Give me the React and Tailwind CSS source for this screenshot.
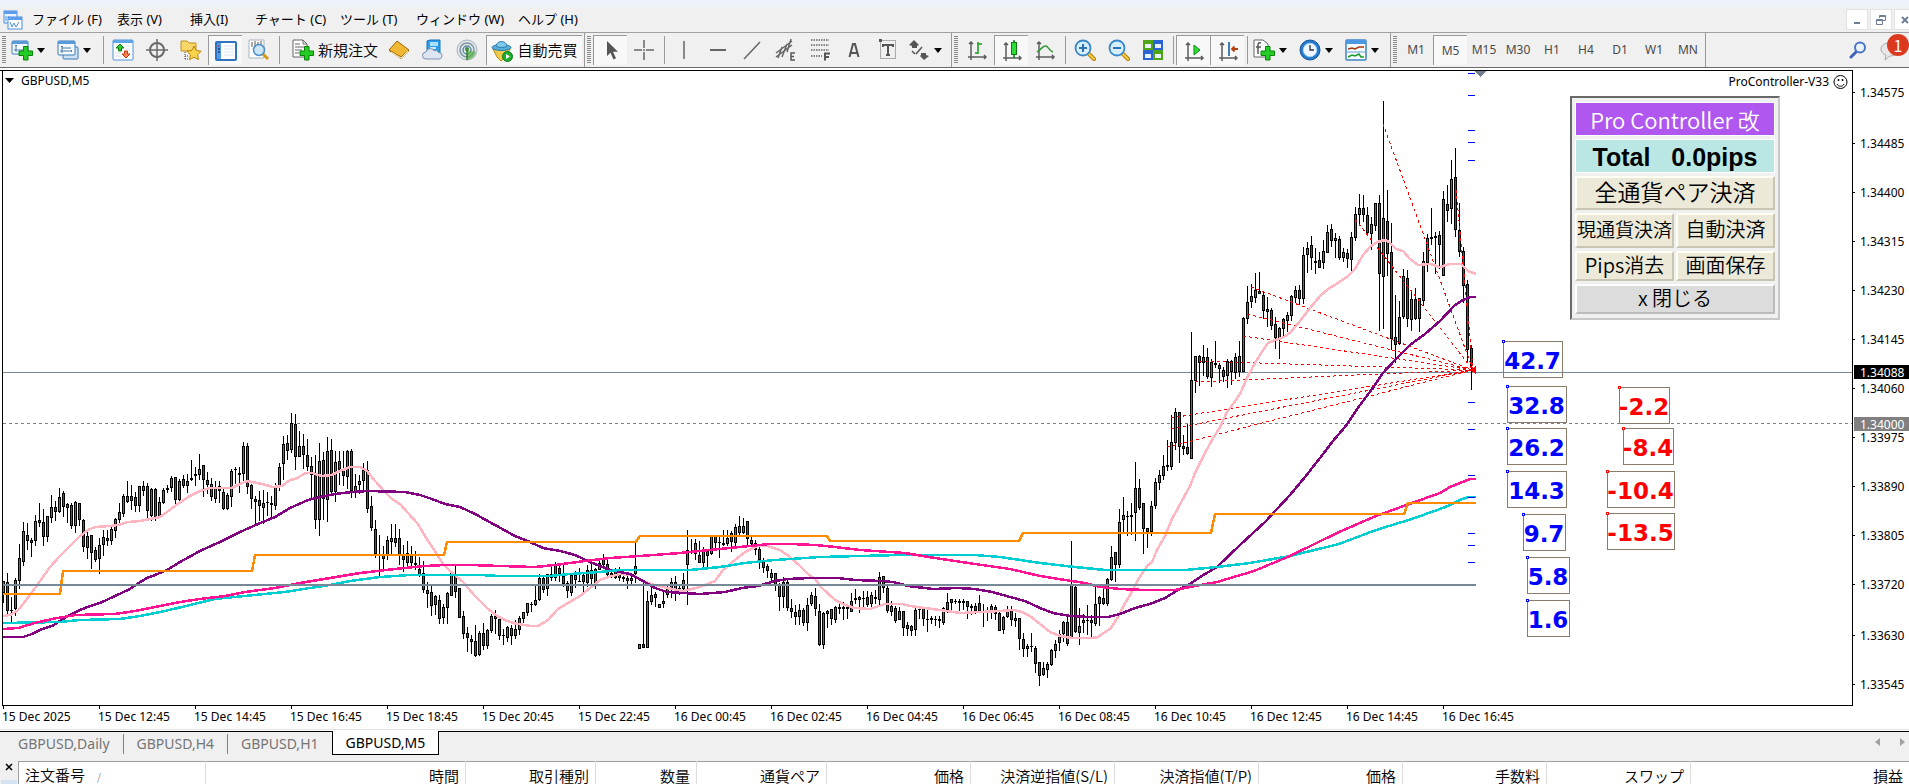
import { useMemo, useState } from "react";

// Candles as "high top bottom low direction", three units per pixel, counted down from `base`
const CANDLE_GROUPS = [
  {
    first: 0,
    base: 380,
    rows: `603 603 638 670 u,579 606 691 702 d,651 691 691 728 d,594 600 685 710 u,494 534 601 629 u,426 454 545 558 u,429 465 481 510 d,476 481 487 533 d,405 423 482 498 u,369 420 427 441 d,387 426 469 498 d,408 409 469 486 u,345 381 412 429 u,363 381 394 423 d,324 352 395 399 u,333 340 379 412 d,369 373 382 430 u,369 376 437 447 d,363 367 437 459 u,369 370 418 439 d,417 421 499 516 d,455 468 502 537 u,465 466 517 567 d,501 511 538 546 d,474 496 536 582 u,450 472 493 528 u,450 475 482 498 d,436 447 481 495 u,414 418 451 476 u,369 397 418 432 u,342 349 400 411 u,303 349 363 369 d,315 349 361 391 d,336 352 376 397 d,318 319 376 397 u,303 319 331 349 u,309 319 391 418 d,324 328 406 423 u,324 328 412 423 d,351 367 409 415 u,324 331 367 372 u,315 324 328 339 d,288 294 322 336 u,291 292 358 376 d,297 304 358 366 u,285 298 316 324 d,282 304 316 339 u,240 296 298 303 d,261 283 286 318 d,222 268 283 300 u,255 256 298 352 d,276 301 313 342 d,294 313 349 363 d,303 322 355 369 u,303 319 331 370 d,327 337 385 390 d,339 346 385 390 u,267 274 349 381 u,261 268 268 312 d,261 280 283 340 d,186 199 280 313 u,189 199 319 343 d,312 316 355 387 d,348 358 364 435 d,333 361 376 423 d,330 370 382 432 u,336 367 367 409 d,348 370 373 420 d,309 319 376 391 u,249 262 318 333 u,168 193 250 300 u,165 190 211 240 d,99 130 208 219 u,102 133 229 270 d,153 199 229 232 u,162 199 223 267 d,177 226 259 273 d,231 259 283 355 d,225 283 418 448 d,189 244 418 468 u,216 241 355 420 d,171 214 358 426 u,177 211 334 349 d,213 247 334 366 u,213 244 268 316 d,213 268 286 318 d,210 214 289 327 u,207 214 331 354 d,282 319 334 354 u,285 304 313 342 u,249 271 301 330 u,243 271 385 399 d,349 379 442 453 d,420 448 520 534 d,465 522 524 588 d,498 523 535 567 d,468 481 523 540 u,432 475 485 522 u,432 475 487 502 d,447 475 522 555 d,495 523 538 576 d,483 520 547 562 u,498 523 547 565 d,513 550 553 570 d,531 568 583 591 d,543 580 628 639 d,606 631 640 684 d,618 637 676 708 d,645 649 673 705 u,645 661 715 732 d,672 682 712 732 u,636 640 682 732 u,579 580 646 648 u,558 582 634 655 d,624 625 712 714 d,693 709 760 777 d,741 760 772 816 d,766 778 784 822 d,735 784 826 833 d,754 760 823 828 u,729 760 796 811 d,747 751 796 807 u,702 709 751 759 u,690 709 715 762 d,714 718 766 780 d,749 766 766 795 d,739 742 772 787 u,735 745 766 795 d,720 748 766 777 u,708 715 748 765 u`,
  },
  {
    first: 130,
    base: 500,
    rows: `336 337 355 370 u,309 310 338 349 u,306 313 313 336 d,258 300 313 318 u,222 235 298 303 u,233 235 268 280 d,222 223 265 288 u,201 223 232 244 u,186 196 232 243 u,189 205 220 246 d,195 229 250 262 d,243 250 271 294 d,222 226 277 288 u,213 226 238 265 u,204 244 244 246 d,222 226 244 276 d,195 211 247 261 u,193 211 235 261 d,205 207 248 267 u,174 190 208 210 u,162 178 193 208 d,180 193 223 231 d,207 220 229 234 d,205 208 232 238 d,201 224 232 243 d,228 233 234 246 d,225 235 241 267 d,222 235 241 252 u,123 199 220 249 u,432 433 445 447 u,240 433 442 444 d,273 304 442 444 u,252 286 304 315 u,278 283 292 321 d,312 313 322 323 u,276 304 311 326 u,252 265 283 294 u,234 247 265 294 u,228 247 265 303 d,252 265 277 285 d,219 241 266 274 u,90 151 193 315 u,117 157 158 163 d,117 130 160 180 u,123 166 187 189 d,141 151 187 201 u,151 153 167 205 d,105 106 160 165 u,106 109 127 144 d,108 127 127 174 d,90 130 133 138 d,90 115 130 138 u,94 100 124 156 d,72 82 127 141 u,48 79 97 111 u,54 79 97 102 u,63 64 115 136 d,108 121 130 145 u,120 130 148 166 d,132 148 178 207 d,174 184 202 220 d,192 199 211 234 d,208 220 232 243 u,219 220 256 273 d,250 256 289 333 d,231 247 289 324 u,234 246 322 333 d,297 325 334 355 d,315 337 349 375 d,312 331 349 375 u,324 331 367 378 d,294 316 367 393 u,276 286 310 318 u,264 289 325 348 d,312 334 433 438 d,336 340 433 447 u,330 333 341 384 u,327 328 355 375 d,318 322 358 369 u,303 322 325 342 d,306 322 325 360 d,312 322 325 357 d,279 304 334 336 u,267 295 298 312 d,288 292 298 339 u,273 295 295 321 d,273 292 313 321 d,276 286 311 324 u,272 292 295 312 d,216 232 298 315 u,228 229 262 280 d,258 265 331 340 d`,
  },
  {
    first: 222,
    base: 400,
    rows: `603 618 634 648 u,619 625 661 669 d,621 634 658 660 u,633 634 682 708 d,666 676 685 708 u,675 678 691 708 d,624 631 689 708 u,618 627 628 657 d,624 626 655 678 d,630 658 658 696 d,648 655 658 672 d,648 657 658 678 d,648 657 662 684 d,621 625 667 675 u,579 606 628 639 u,597 598 607 633 d,597 604 605 612 d,597 604 607 633 d,597 604 607 630 d,603 604 619 657 d,612 618 622 645 d,609 619 631 643 d,585 610 634 636 d,612 636 637 681 d,621 636 637 663 d,612 619 637 657 u,617 622 640 660 d,636 640 691 693 d,648 652 688 702 u,618 634 650 655 u,618 630 658 678 d,639 655 661 681 u,654 655 715 750 d,699 718 745 771 d,732 739 745 772 u,699 739 739 756 d,738 745 791 819 d,786 787 826 858 d,786 805 824 828 u,786 793 808 834 u,747 751 794 798 u,720 733 751 774 u,690 703 727 753 u,663 667 700 726 u,645 667 731 738 d,423 556 715 716 u,556 562 694 699 d,624 679 697 735 u,642 660 667 700 u,615 660 661 705 d,645 661 667 711 d,560 613 670 678 u,588 592 611 678 u,555 595 610 615 d,534 538 610 619 u,438 472 538 543 u,456 457 493 546 d,327 367 493 504 u,291 346 358 396 u,333 348 350 408 d,309 346 349 406 d,186 265 337 423 u,237 265 322 330 d,309 310 385 462 d,384 385 394 444 d,303 319 394 408 u,234 247 316 327 u,210 226 247 270 u,165 199 227 240 u,120 196 199 213 d,45 127 199 212 u,24 37 127 150 u,36 37 139 189 d,105 139 145 165 d,72 142 161 165 d`,
  },
  {
    first: 297,
    base: 80,
    rows: `756 901 1135 1138 u,828 829 901 939 u,825 829 847 918 d,795 832 848 888 u,804 832 889 898 d,837 847 892 921 u,783 850 853 864 d,849 856 865 909 d,861 871 889 906 d,837 844 886 924 u,840 844 874 915 d,819 832 877 898 u,783 829 874 891 d,712 715 874 876 u,618 667 715 732 u,612 649 664 684 u,579 631 652 669 u,576 634 640 644 d,636 646 691 717 d,651 688 694 741 u,686 691 736 750 d,711 733 772 807 d,741 745 772 837 u,714 718 745 768 u,696 706 721 756 u,645 649 706 723 u,618 631 652 669 u,615 631 655 675 d,501 526 655 672 u,486 505 523 579 u,468 496 532 570 d,504 544 548 582 d,516 541 562 564 d,480 514 547 567 u,435 457 517 519 u,432 448 481 501 d,459 475 481 534 u,468 478 532 540 d,504 517 532 546 u,507 520 535 564 d,456 472 538 573 u,381 403 472 483 u,342 385 403 432 u,345 385 403 426 d,381 406 457 465 d,411 433 460 510 u,369 370 436 453 u,345 370 580 753 d,63 415 589 747 u,330 424 520 588 d,429 517 775 811 d,645 772 793 849 d,663 712 790 795 u,567 589 709 717 u,570 595 715 743 d,630 658 718 753 u,624 658 715 720 d,654 655 715 756 u,516 544 661 678 u,462 475 547 576 u,384 471 475 495 d,456 469 472 582 d,453 466 493 567 d,333 358 586 588 u,315 373 391 426 d,240 298 385 432 u,204 292 448 471 d,369 451 514 531 d,501 514 616 669 d,600 613 808 846 d,795 805 857 930 d`,
  },
];

const AVERAGES = [
  {
    color: "#ffb6c1",
    points: "3,616 10,615 17,611 20,608 30,595 40,581 50,567 60,556 70,546 80,536 88,530 95,527 110,526 118,525 128,522 140,521 155,518 160,517 167,512 175,506 190,496 200,491 210,488 232,488 240,484 247,481 262,484 273,487 282,486 290,480 295,479 306,473 312,473 322,476 332,475 340,471 350,467 360,467 367,471 375,481 384,491 392,499 400,504 408,513 418,524 425,536 433,548 443,564 450,571 456,576 463,582 475,596 487,608 497,616 505,620 513,623 530,626 538,626 548,620 558,609 568,603 580,596 590,588 600,580 608,577 620,574 633,575 645,582 655,585 667,588 683,591 700,587 715,581 723,570 735,560 745,552 757,546 767,546 780,550 790,557 800,566 808,574 815,579 822,588 835,600 845,605 855,608 870,609 885,604 902,604 910,606 925,608 940,610 960,613 980,612 1000,611 1014,610 1022,612 1030,616 1040,624 1050,632 1060,636 1072,638 1092,638 1098,637 1110,629 1117,619 1124,605 1130,595 1138,580 1147,566 1152,562 1157,550 1165,536 1172,519 1178,508 1185,495 1190,486 1195,473 1204,455 1212,440 1220,427 1227,412 1233,404 1240,394 1247,378 1255,363 1263,350 1268,343 1273,341 1284,337 1290,333 1300,321 1310,308 1320,296 1328,289 1338,283 1347,277 1355,269 1363,255 1370,247 1377,242 1386,240 1390,243 1396,249 1403,251 1410,259 1418,265 1430,264 1440,267 1450,264 1461,264 1468,271 1476,274",
  },
  {
    color: "#800080",
    points: "3,637 23,637 32,634 42,629 52,626 60,621 68,616 80,610 90,606 100,603 115,596 130,589 137,584 147,578 155,575 167,570 180,562 200,551 222,541 240,532 258,524 275,517 290,508 308,500 320,497 335,494 352,492 368,491 405,492 420,495 432,499 445,504 460,507 475,514 495,525 515,536 530,542 543,548 560,551 575,555 590,562 610,570 630,574 643,581 655,588 667,592 683,593 700,594 725,592 742,588 758,586 775,581 788,579 810,578 838,578 855,580 882,581 893,582 908,586 933,589 957,588 975,589 992,592 1010,597 1025,601 1040,608 1053,613 1070,616 1090,617 1108,617 1120,614 1135,608 1150,604 1165,598 1178,590 1190,584 1200,577 1217,567 1240,545 1265,522 1290,495 1305,477 1320,458 1333,441 1345,427 1360,405 1372,389 1383,373 1395,360 1410,345 1425,334 1440,321 1455,305 1463,300 1470,297 1476,297",
  },
  {
    color: "#00ced1",
    points: "3,623 60,622 80,620 120,619 140,616 165,611 190,605 215,599 245,596 285,592 310,588 330,585 350,581 380,577 410,575 480,575 500,576 550,576 570,574 600,572 620,570 690,570 720,567 745,563 775,560 820,557 860,556 900,555 975,555 1000,557 1040,563 1075,567 1105,570 1185,570 1217,567 1250,563 1290,556 1339,544 1376,530 1412,519 1440,509 1450,505 1460,500 1468,497 1476,497",
  },
  {
    color: "#ff1493",
    points: "3,629 18,628 35,623 52,619 75,615 115,614 135,611 155,607 180,602 200,599 225,596 245,592 275,588 300,583 330,578 360,573 395,569 425,566 445,565 470,565 500,566 535,567 555,565 585,561 610,558 640,556 680,553 710,550 740,547 770,544 790,544 815,545 835,547 860,550 905,553 935,558 975,564 1010,569 1040,576 1065,580 1085,583 1100,587 1120,589 1145,590 1175,590 1190,587 1217,582 1254,571 1290,556 1339,532 1376,516 1412,503 1440,493 1450,487 1460,483 1470,479 1476,479",
  },
  {
    color: "#ff8c00",
    points: "3,594 60,594 63,571 252,571 255,555 444,555 447,542 636,542 640,536 827,536 830,541 1019,541 1023,533 1211,533 1215,514 1404,514 1408,503 1476,503",
  },
];

const ENTRIES = [[1383, 124], [1355, 219], [1251, 287], [1247, 314], [1243, 336], [1199, 361], [1195, 382], [1171, 418], [1171, 429], [1167, 447], [1455, 178]];
const LEVELS = [73, 95, 130, 142, 160, 402, 429, 475, 497, 533, 545, 562];

const PRICES = [
  ["1.34575", 92], ["1.34485", 143], ["1.34400", 192], ["1.34315", 241], ["1.34230", 290], ["1.34145", 339], ["1.34060", 388],
  ["1.33975", 437], ["1.33890", 486], ["1.33805", 535], ["1.33720", 584], ["1.33630", 635], ["1.33545", 684],
];

const TIMES = [
  "15 Dec 2025", "15 Dec 12:45", "15 Dec 14:45", "15 Dec 16:45", "15 Dec 18:45", "15 Dec 20:45", "15 Dec 22:45", "16 Dec 00:45",
  "16 Dec 02:45", "16 Dec 04:45", "16 Dec 06:45", "16 Dec 08:45", "16 Dec 10:45", "16 Dec 12:45", "16 Dec 14:45", "16 Dec 16:45",
];

const PIPS = [
  { x: 1503, y: 341, w: 59, text: "42.7", color: "#0000ff" },
  { x: 1507, y: 386, w: 59, text: "32.8", color: "#0000ff" },
  { x: 1507, y: 428, w: 59, text: "26.2", color: "#0000ff" },
  { x: 1507, y: 471, w: 59, text: "14.3", color: "#0000ff" },
  { x: 1523, y: 514, w: 42, text: "9.7", color: "#0000ff" },
  { x: 1527, y: 557, w: 42, text: "5.8", color: "#0000ff" },
  { x: 1527, y: 600, w: 42, text: "1.6", color: "#0000ff" },
  { x: 1619, y: 387, w: 50, text: "-2.2", color: "#ff0000" },
  { x: 1623, y: 428, w: 50, text: "-8.4", color: "#ff0000" },
  { x: 1607, y: 471, w: 67, text: "-10.4", color: "#ff0000" },
  { x: 1607, y: 513, w: 67, text: "-13.5", color: "#ff0000" },
];

const MENUS = [
  { label: "ファイル (F)", width: "w-[85px]" },
  { label: "表示 (V)", width: "w-[73px]" },
  { label: "挿入(I)", width: "w-[65px]" },
  { label: "チャート (C)", width: "w-[85px]" },
  { label: "ツール (T)", width: "w-[76px]" },
  { label: "ウィンドウ (W)", width: "w-[102px]" },
  { label: "ヘルプ (H)", width: "w-[80px]" },
];

const TIMEFRAMES = ["M1", "M5", "M15", "M30", "H1", "H4", "D1", "W1", "MN"];
const TABS = ["GBPUSD,Daily", "GBPUSD,H4", "GBPUSD,H1", "GBPUSD,M5"];

const COLUMNS = [
  { label: "注文番号", width: "w-[187px]", first: true },
  { label: "時間", width: "w-[260px]" },
  { label: "取引種別", width: "w-[130px]" },
  { label: "数量", width: "w-[101px]" },
  { label: "通貨ペア", width: "w-[130px]" },
  { label: "価格", width: "w-[144px]" },
  { label: "決済逆指値(S/L)", width: "w-[144px]" },
  { label: "決済指値(T/P)", width: "w-[144px]" },
  { label: "価格", width: "w-[144px]" },
  { label: "手数料", width: "w-[144px]" },
  { label: "スワップ", width: "w-[144px]" },
  { label: "損益", width: "" },
];

const PRESSED = "border-t border-l border-[#9a9a9a] border-b-white border-r-white bg-[#f8f8f8]";

/* ── Toolbar icons ── */
function Icon({ children }) {
  return (
    <svg width="22" height="22" viewBox="0 0 22 22" fill="none" aria-hidden="true" className="shrink-0">
      {children}
    </svg>
  );
}

const Plus = () => (
  <path d="M12.5 7.5h4.500v4.500h4.500v4.500h-4.500v4.500h-4.500v-4.500h-4.500v-4.500h4.500z" fill="#25cc25" stroke="#078307" />
);

const NewChartIcon = () => (
  <Icon>
    <rect x="1" y="2" width="16" height="13" rx="1" fill="#f4faff" stroke="#3c7ab8" />
    <path d="M1 2h16v3H1z" fill="#5a9ad8" />
    <path d="M5 6v7M3 11h9M4 7l1-1 1 1" stroke="#4a7aa8" />
    <Plus />
  </Icon>
);
const ProfilesIcon = () => (
  <Icon>
    <rect x="6" y="8" width="15" height="12" rx="1" fill="#cfe3f7" stroke="#3c7ab8" />
    <rect x="1" y="2" width="17" height="14" rx="1" fill="#f4faff" stroke="#3c7ab8" />
    <path d="M1 2h17v3H1z" fill="#5a9ad8" />
    <path d="M5 7v7M3 12h12M4 8l1-1 1 1M14 11l1 1-1 1M5 9h9" stroke="#4a7aa8" />
  </Icon>
);
const MarketIcon = () => (
  <Icon>
    <rect x="1" y="1" width="20" height="20" rx="1" fill="#fff" stroke="#4d94d8" />
    <path d="M1 1h20v3H1z" fill="#5fa5e6" />
    <path d="M13 7h6M13 10h6M3 14h6M3 17h6" stroke="#d6e2ee" />
    <path d="M8 5l4 4H9.500v3h-3V9H4z" fill="#35c435" stroke="#0c7c0c" />
    <path d="M14 19l-4-4h2.500v-3h3v3H18z" fill="#ff8257" stroke="#c43a12" />
  </Icon>
);
const TargetIcon = () => (
  <Icon>
    <circle cx="11" cy="11" r="7" stroke="#686868" strokeWidth="2" />
    <path d="M11 0v22M0 11h22" stroke="#686868" strokeWidth="1.5" />
  </Icon>
);
const FolderStarIcon = () => (
  <Icon>
    <path d="M1 2h6l2 2h7v8H1z" fill="#f8d768" stroke="#c09020" />
    <path d="M5 13v7M5 17h4M5 20h4" stroke="#444" strokeDasharray="1 1" />
    <path d="M14 7l2.200 4.500 5 .7-3.600 3.500.9 5L14 18.300l-4.500 2.400.9-5-3.600-3.500 5-.7z" fill="#fbd34a" stroke="#b8860b" />
  </Icon>
);
const NavigatorIcon = () => (
  <Icon>
    <rect x="1" y="2" width="20" height="18" rx="1" fill="#fff" stroke="#2f72bd" strokeWidth="2" />
    <path d="M2 3h4v16H2z" fill="#4f9be6" />
    <path d="M3 6h2" stroke="#c22" />
    <path d="M3 9h2M3 12h2" stroke="#113" />
    <path d="M9 6h10M9 9h10M9 12h10M9 15h10" stroke="#d8e3ef" />
  </Icon>
);
const TesterIcon = () => (
  <Icon>
    <path d="M1 1h15v18H1z" fill="#fff" stroke="#a8b4c0" />
    <path d="M4 3v5M7 2v6M10 3v4M13 2v5" stroke="#555" />
    <path d="M15 15l5 5" stroke="#d49a16" strokeWidth="3" />
    <circle cx="11" cy="11" r="5.5" fill="#bfe0f8" fillOpacity=".8" stroke="#4f8fc4" strokeWidth="1.5" />
  </Icon>
);
const NewOrderIcon = () => (
  <Icon>
    <path d="M1 1h10l4 4v13H1z" fill="#fff" stroke="#666" />
    <path d="M11 1v4h4M3 5h5M3 8h9M3 11h7M3 14h4" stroke="#666" />
    <Plus />
  </Icon>
);
const BookIcon = () => (
  <Icon>
    <path d="M1 12L9 3l12 9-8 8z" fill="#a66c05" />
    <path d="M1 11L9 2l12 9-8 7z" fill="#f0b832" stroke="#99650a" />
    <path d="M3 13l10 6 7-7" stroke="#fff3c0" />
  </Icon>
);
const CloudIcon = () => (
  <Icon>
    <path d="M5 2l3-1h10v13H5z" fill="#2f9de8" stroke="#1476bf" />
    <path d="M8 3h8v4H8z" fill="#a9e0ff" />
    <path d="M8 9h6" stroke="#fff" strokeWidth="1.5" />
    <path d="M4 20a3.500 3.500 0 010-7 4.500 4.500 0 018-1.500 3.800 3.800 0 014.500 2 3.300 3.300 0 011 6.500z" fill="#dde5f2" stroke="#7d8fae" />
  </Icon>
);
const SignalIcon = () => (
  <Icon>
    <circle cx="11" cy="11" r="10" fill="#e2e6e9" stroke="#a9b4bc" />
    <circle cx="11" cy="11" r="7" stroke="#7f97a5" strokeWidth="1.5" />
    <circle cx="11" cy="11" r="4" stroke="#5f8ca8" strokeWidth="1.5" />
    <path d="M11 11v10a10 10 0 009-8z" fill="#57b04a" fillOpacity=".7" />
    <circle cx="11" cy="10" r="2" fill="#3b8f3a" />
    <path d="M11 11v10" stroke="#2f7f2f" strokeWidth="1.5" />
  </Icon>
);
const AutoTradeIcon = () => (
  <Icon>
    <path d="M2 9h17l-5 9-4 3-4-4z" fill="#f3c94a" stroke="#b58a14" />
    <ellipse cx="10.5" cy="7.5" rx="9.5" ry="3" fill="#58aedb" stroke="#2a7ca8" />
    <path d="M5 6c1-6 10-6 11 0-2 2-9 2-11 0z" fill="#7cc8ec" stroke="#2a7ca8" />
    <circle cx="16.500" cy="16.500" r="5" fill="#1fae2b" stroke="#0c7d16" />
    <path d="M15 14l4 2.500-4 2.500z" fill="#fff" />
  </Icon>
);
const CursorIcon = () => (
  <Icon><path d="M7 1v15l3.500-3.300 3 6.800 2.500-1.200-3-6.600h5z" fill="#555" /></Icon>
);
const CrosshairIcon = () => (
  <Icon><path d="M11 1v8M11 13v8M1 11h8M13 11h8M10 11h2" stroke="#666" strokeWidth="1.5" /></Icon>
);
const VLineIcon = () => <Icon><path d="M11 2v18" stroke="#666" strokeWidth="1.5" /></Icon>;
const HLineIcon = () => <Icon><path d="M3 11h16" stroke="#666" strokeWidth="2" /></Icon>;
const TrendIcon = () => <Icon><path d="M3 20L19 3" stroke="#666" strokeWidth="1.5" /></Icon>;
const ChannelIcon = () => (
  <Icon>
    <path d="M1 14L17 2M1 18L17 6M3 19L7 8M7 18l5-13M12 13l4-13" stroke="#666" strokeWidth="1.5" />
    <path d="M20 14h-4v7h4M16 17.500h3" stroke="#555" strokeWidth="1.5" />
  </Icon>
);
const FiboIcon = () => (
  <Icon>
    <path d="M2 1h18M2 6h18M2 11h18M2 17h11" stroke="#666" strokeWidth="1.5" strokeDasharray="1.5 1" />
    <path d="M16 21.500v-7h5M16 18h4" stroke="#555" strokeWidth="2" />
  </Icon>
);
const TextIcon = () => (
  <Icon><path d="M6.500 18L10 5h2l3.500 13M7.500 14h7" stroke="#555" strokeWidth="2" /></Icon>
);
const LabelIcon = () => (
  <Icon>
    <rect x="3.500" y="1.500" width="15" height="18" stroke="#666" strokeDasharray="1 1" />
    <path d="M6 8V6h10v2M11 6v10M9 16h4" stroke="#555" strokeWidth="2" />
    <path d="M2 0h3v3H2z" fill="#555" />
  </Icon>
);
const ShapesIcon = () => (
  <Icon>
    <path d="M6 1l5 5-2 1v2H4V7L1 6zM13 14h5v2l3 1-5 4-4-4 1-1z" fill="#555" />
    <path d="M4 12l3 3M8 15l6-7" stroke="#555" strokeWidth="1.5" />
  </Icon>
);
const Axes = () => <path d="M5 3v18M2 18h18M3 5l2-2 2 2M18 16l2 2-2 2" stroke="#5c5c5c" strokeWidth="1.5" />;
const BarsIcon = () => <Icon><Axes /><path d="M12 3v12M12 5h4M9 14h3" stroke="#169c1b" strokeWidth="1.5" /></Icon>;
const CandlesIcon = () => (
  <Icon><Axes /><path d="M13 0v18" stroke="#0a7d10" strokeWidth="1.5" /><rect x="10.5" y="2.5" width="5" height="12" fill="#2fdc37" stroke="#0a7d10" /></Icon>
);
const LineIcon = () => <Icon><Axes /><path d="M3 13c5-3 6-7 9-6s3 5 7 6" stroke="#2e9b35" strokeWidth="1.5" /></Icon>;
const ZoomIcon = ({ plus }) => (
  <Icon>
    <path d="M14 14l6 6" stroke="#b87d08" strokeWidth="4" strokeLinecap="round" />
    <path d="M14 14l6 6" stroke="#f7cf45" strokeWidth="2" strokeLinecap="round" />
    <circle cx="9" cy="9" r="7.5" fill="#d5efff" stroke="#3a86c8" strokeWidth="1.8" />
    <path d={plus ? "M5 9h8M9 5v8" : "M5 9h8"} stroke="#2c73b0" strokeWidth="2" />
  </Icon>
);
const TilesIcon = () => (
  <Icon>
    <path d="M1 1h10v10H1zM11 11h10v10H11z" fill="#4ea516" />
    <path d="M11 1h10v10H11zM1 11h10v10H1z" fill="#2b62d4" />
    <path d="M3 5h6v4H3zM13 5h6v4h-6zM3 15h6v4H3zM13 15h6v4h-6z" fill="#e9f3ff" />
  </Icon>
);
const ScrollIcon = () => <Icon><Axes /><path d="M11 5v10l6-5z" fill="#2fdc37" stroke="#0a8d10" /></Icon>;
const ShiftIcon = () => (
  <Icon>
    <Axes />
    <path d="M12 2v14" stroke="#2b6fa8" strokeWidth="1.8" />
    <path d="M21 9h-6M17.500 6.500L15 9l2.500 2.500" stroke="#b8420e" strokeWidth="1.8" />
  </Icon>
);
const IndicatorsIcon = () => (
  <Icon>
    <path d="M1 1h9l5 4v13H1z" fill="#fff" stroke="#666" />
    <path d="M8 4c-3-1-3 1-3 3v8M3 8h5" stroke="#555" strokeWidth="1.5" />
    <Plus />
  </Icon>
);
const ClockIcon = () => (
  <Icon>
    <circle cx="11" cy="11" r="10" fill="#2479cc" stroke="#15569a" />
    <circle cx="11" cy="11" r="6.800" fill="#eef7ff" stroke="#9fd0f8" />
    <path d="M11 6v5h4" stroke="#333" strokeWidth="1.3" />
  </Icon>
);
const TemplateIcon = () => (
  <Icon>
    <rect x="1" y="1" width="20" height="20" rx="1" fill="#f6fbff" stroke="#3c82c4" strokeWidth="1.5" />
    <path d="M1 1h20v4H1z" fill="#4c98e0" />
    <path d="M3 10l4-1 3 1 4-2h5" stroke="#a33a0e" strokeWidth="1.5" />
    <path d="M2 13h18" stroke="#6ba0d0" />
    <path d="M3 18l4-2 3 1 4-2 2 3h3" stroke="#1f9a2a" strokeWidth="1.5" />
  </Icon>
);

/* ── Toolbar parts ── */
const Grip = () => (
  <div className="flex w-2 shrink-0 items-center justify-center">
    <div className="h-7 w-1 bg-[repeating-linear-gradient(180deg,#8a8a8a_0,#8a8a8a_1px,#f0f0f0_1px,#f0f0f0_2px)]" />
  </div>
);

const Separator = () => (
  <div className="flex w-[6px] shrink-0 items-center justify-center">
    <div className="h-7 w-px bg-[#9a9a9a]" />
  </div>
);

const Caret = () => (
  <svg width="8" height="5" viewBox="0 0 8 5" aria-hidden="true" className="shrink-0"><path d="M0 0h8L4 5z" fill="#000" /></svg>
);

function Tool({ label, pressed, children }) {
  return (
    <button aria-label={label} className={`flex h-[30px] w-[34px] shrink-0 items-center justify-center ${pressed ? PRESSED : ""}`}>
      {children}
    </button>
  );
}

function DropTool({ label, children }) {
  return (
    <button aria-label={label} className="flex h-[30px] w-[46px] shrink-0 items-center gap-1 pl-[3px]">
      {children}
      <Caret />
    </button>
  );
}

const Section = ({ children, className = "" }) => (
  <div className={`flex shrink-0 items-center self-stretch border-r border-[#9a9a9a] ${className}`}>{children}</div>
);

function MenuBar() {
  return (
    <nav className="flex h-[25px] shrink-0 items-center bg-[#f0f0f0] pl-[3px] font-['Noto_Sans','Noto_Sans_CJK_JP',sans-serif] text-[13px] text-black">
      <svg width="20" height="20" viewBox="0 0 20 20" fill="none" aria-hidden="true" className="mr-[9px] shrink-0">
        <rect x="1" y="1" width="13" height="12" fill="#eaf4ff" stroke="#4c8fdc" />
        <path d="M1 1h13v3H1z" fill="#5b9cec" />
        <path d="M3 6v5M6 6v4" stroke="#4c8fdc" />
        <rect x="5" y="7" width="14" height="12" fill="#fff" stroke="#4c8fdc" />
        <path d="M5 7h14v3H5z" fill="#5b9cec" />
        <path d="M7 12l2 5 2-4 2 4 3-5" stroke="#4c8fdc" />
      </svg>
      {MENUS.map(menu => (
        <button key={menu.label} className={`${menu.width} shrink-0 whitespace-nowrap text-left`}>{menu.label}</button>
      ))}
      <div className="ml-auto flex gap-[2px] overflow-hidden">
        <button aria-label="最小化" className="flex h-[21px] w-[22px] items-center justify-center border border-[#e2e2e2] bg-white">
          <svg width="10" height="10" viewBox="0 0 10 10"><path d="M2 7h6v2H2z" fill="#6f7f93" /></svg>
        </button>
        <button aria-label="元に戻す" className="flex h-[21px] w-[22px] items-center justify-center border border-[#e2e2e2] bg-white">
          <svg width="10" height="10" viewBox="0 0 10 10" fill="none" stroke="#6f7f93"><path d="M3.500 3V.5h6v5H7M3 1.500h7M.5 4.500h6v5h-6zM0 5.500h7" /></svg>
        </button>
        <button aria-label="閉じる" className="flex h-[21px] w-[15px] items-center justify-end border border-r-0 border-[#e2e2e2] bg-white">
          <svg width="8" height="10" viewBox="0 0 8 10" fill="none" stroke="#6f7f93" strokeWidth="2"><path d="M1 2l6 6M7 2L1 8" /></svg>
        </button>
      </div>
    </nav>
  );
}

function Toolbar() {
  const [timeframe, setTimeframe] = useState("M5");

  return (
    <div className="flex h-9 shrink-0 items-center overflow-hidden border-t border-b border-t-[#a0a0a0] border-b-[#696969] bg-[#f0f0f0]">
      <Section>
        <Grip />
        <DropTool label="新規チャート"><NewChartIcon /></DropTool>
        <DropTool label="プロファイル"><ProfilesIcon /></DropTool>
        <Separator />
        <Tool label="気配値表示"><MarketIcon /></Tool>
        <Tool label="データウィンドウ"><TargetIcon /></Tool>
        <Tool label="ナビゲーター"><FolderStarIcon /></Tool>
        <Tool label="ターミナル" pressed><NavigatorIcon /></Tool>
        <Tool label="ストラテジーテスター"><TesterIcon /></Tool>
        <Separator />
        <button className="flex h-[30px] w-[100px] items-center justify-end gap-1 pr-1 whitespace-nowrap text-[15px] font-[350]">
          <NewOrderIcon />
          新規注文
        </button>
        <Tool label="メタエディター"><BookIcon /></Tool>
        <Tool label="ホスティング"><CloudIcon /></Tool>
        <Tool label="シグナル"><SignalIcon /></Tool>
        <button className={`mx-[2px] flex h-[30px] w-[96px] items-center justify-center gap-1 whitespace-nowrap text-[15px] font-[350] ${PRESSED}`}>
          <AutoTradeIcon />
          自動売買
        </button>
      </Section>

      <Section>
        <Grip />
        <Tool label="カーソル" pressed><CursorIcon /></Tool>
        <Tool label="クロスヘア"><CrosshairIcon /></Tool>
        <Separator />
        <Tool label="垂直線"><VLineIcon /></Tool>
        <Tool label="水平線"><HLineIcon /></Tool>
        <Tool label="トレンドライン"><TrendIcon /></Tool>
        <Tool label="チャネル"><ChannelIcon /></Tool>
        <Tool label="フィボナッチ"><FiboIcon /></Tool>
        <Tool label="テキスト"><TextIcon /></Tool>
        <Tool label="ラベル"><LabelIcon /></Tool>
        <DropTool label="図形"><ShapesIcon /></DropTool>
      </Section>

      <Section className="pr-[2px]">
        <Grip />
        <Tool label="バーチャート"><BarsIcon /></Tool>
        <Tool label="ローソク足" pressed><CandlesIcon /></Tool>
        <Tool label="ラインチャート"><LineIcon /></Tool>
        <Separator />
        <Tool label="拡大"><ZoomIcon plus /></Tool>
        <Tool label="縮小"><ZoomIcon /></Tool>
        <Tool label="整列"><TilesIcon /></Tool>
        <Separator />
        <Tool label="自動スクロール" pressed><ScrollIcon /></Tool>
        <Tool label="チャートシフト" pressed><ShiftIcon /></Tool>
        <Separator />
        <DropTool label="インディケータ"><IndicatorsIcon /></DropTool>
        <DropTool label="時間足"><ClockIcon /></DropTool>
        <DropTool label="定型チャート"><TemplateIcon /></DropTool>
      </Section>

      <Section>
        <Grip />
        {TIMEFRAMES.map(tf => (
          <button
            key={tf}
            onClick={() => setTimeframe(tf)}
            className={`h-[30px] w-[34px] font-['Noto_Sans',sans-serif] text-xs text-[#4a4a4a] ${tf === timeframe ? PRESSED : ""}`}
          >
            {tf}
          </button>
        ))}
      </Section>

      <div className="ml-auto flex shrink-0 items-center gap-3">
        <button aria-label="検索">
          <svg width="18" height="18" viewBox="0 0 18 18" fill="none">
            <path d="M8 10l-6 6" stroke="#3c64b8" strokeWidth="3" strokeLinecap="round" />
            <circle cx="11" cy="6.500" r="5" fill="#eaf2fc" stroke="#4a74c4" strokeWidth="2" />
          </svg>
        </button>
        <button aria-label="通知" className="relative h-8 w-[30px]">
          <svg width="24" height="24" viewBox="0 0 24 24" fill="none" className="mt-1">
            <path d="M10 3c6 0 9 3 9 7s-4 6-8 6l-5 4 1-5c-3-1-5-3-5-6s3-6 8-6z" fill="#e8e8e8" stroke="#aaa" />
          </svg>
          <span className="absolute top-0 right-0 h-[22px] w-[22px] rounded-full bg-[#dc3a1e] text-center text-base leading-[22px] text-white">1</span>
        </button>
      </div>
    </div>
  );
}

/* ── Chart ── */
function Chart() {
  const candles = useMemo(
    () =>
      CANDLE_GROUPS.flatMap(({ first, base, rows }) =>
        rows.split(",").map((row, i) => {
          const [high, top, bottom, low, dir] = row.trim().split(" ");
          const y = v => base + Math.floor(Number(v) / 3);
          return { x: 3 + 4 * (first + i), high: y(high), top: y(top), bottom: y(bottom) + 1, low: y(low), up: dir === "u" };
        })
      ),
    []
  );

  return (
    <svg
      viewBox="0 68 1909 663"
      className="block h-full w-full bg-white font-['Noto_Sans',sans-serif] text-xs"
      role="img"
      aria-label="GBPUSD,M5"
    >
      <g shapeRendering="crispEdges">
        <path d="M3 423.500H1852" stroke="#808080" strokeDasharray="3 3" />
        <path d="M3 372.500H1852" stroke="#778899" />

        {candles.map(c => (
          <g key={c.x}>
            <rect x={c.x} y={c.high} width="1" height={Math.max(1, c.low - c.high)} />
            <rect x={c.x - 1} y={c.top} width="3" height={c.bottom - c.top} />
            {c.bottom - c.top > 2 && (
              <rect x={c.x} y={c.top + 1} width="1" height={c.bottom - c.top - 2} fill={c.up ? "#4169e1" : "#dc143c"} />
            )}
          </g>
        ))}

        {ENTRIES.map(([x, y]) => (
          <path key={`${x}-${y}`} d={`M${x} ${y}L1473 370`} stroke="#ff0000" strokeDasharray="3 3" />
        ))}
        <path d="M1470 370l6-4v8z" fill="#ff0000" />

        {AVERAGES.map(line => (
          <polyline key={line.color} points={line.points} fill="none" stroke={line.color} strokeWidth="2.5" />
        ))}
        <path d="M3 585H1476" stroke="#778899" strokeWidth="2" />

        {LEVELS.map(y => (
          <rect key={y} x="1468" y={y} width="7" height="1" fill="#0000ff" />
        ))}
        <path d="M1475 71h11l-5.500 6z" fill="#708090" />

        {/* frame and axis ticks */}
        <path d="M0 70.500H1852.500V705.500H2.500V70.500" fill="none" stroke="#000" />
        {PRICES.map(([price, y]) => (
          <rect key={price} x="1853" y={y} width="2" height="1" />
        ))}
        {TIMES.map((time, i) => (
          <rect key={time} x={3 + 96 * i} y="706" width="1" height="3" />
        ))}
        <path d="M0 729.500H1909" stroke="#e3e3e3" />
      </g>

      <path d="M5 78h9l-4.500 5z" />
      <text x="21" y="85">GBPUSD,M5</text>
      <text x="1829" y="86" textAnchor="end">ProController-V33</text>
      <g fill="none" stroke="#000">
        <circle cx="1840.500" cy="82" r="6.500" />
        <path d="M1837 84c1 3 6 3 7 0" />
        <path d="M1838.500 79v2M1842.500 79v2" strokeWidth="1.5" />
      </g>

      {PRICES.map(([price, y]) => (
        <text key={price} x="1860" y={y + 5}>{price}</text>
      ))}
      <rect x="1854" y="365" width="55" height="14" />
      <text x="1860" y="377" fill="#fff">1.34088</text>
      <rect x="1854" y="417" width="55" height="14" fill="#808080" />
      <text x="1860" y="429" fill="#fff">1.34000</text>
      {TIMES.map((time, i) => (
        <text key={time} x={2 + 96 * i} y="721">{time}</text>
      ))}

      {PIPS.map(pip => (
        <g key={pip.text}>
          <rect x={pip.x + 0.5} y={pip.y + 0.5} width={pip.w} height="36" fill="none" stroke="#8b7b6b" />
          <rect x={pip.x - 0.5} y={pip.y - 0.5} width="2" height="2" fill="#fff" stroke={pip.color} />
          <text
            x={pip.x + pip.w / 2}
            y={pip.y + 28}
            textAnchor="middle"
            fill={pip.color}
            className="font-['DejaVu_Sans',sans-serif] text-[23px] font-bold"
          >
            {pip.text}
          </text>
        </g>
      ))}
    </svg>
  );
}

function PanelButton({ children, className }) {
  return (
    <button className={`flex items-center justify-center overflow-hidden whitespace-nowrap border-2 border-t-[#fffff4] border-l-[#fffff4] border-r-[#c9c5b2] border-b-[#c9c5b2] bg-[#ece9d8] pb-[3px] ${className}`}>
      {children}
    </button>
  );
}

function ControllerPanel() {
  return (
    <section className="absolute top-7 right-[129px] flex w-[210px] flex-col gap-[3px] border-2 border-t-[#696969] border-l-[#696969] border-r-[#c8c8c8] border-b-[#c8c8c8] bg-[#f0f0f0] px-[3px] py-1 font-[350] text-black">
      <h2 className="h-[34px] border border-white bg-[#af57ee] text-center text-[22px] leading-[32px] text-white">Pro Controller 改</h2>
      <div className="h-[34px] whitespace-pre border border-white bg-[#bae7e3] text-center font-['Liberation_Sans',sans-serif] text-[25px] leading-[34px] font-bold">
        {"Total   0.0pips"}
      </div>
      <PanelButton className="h-[34px] text-[23px]">全通貨ペア決済</PanelButton>
      <div className="grid grid-cols-2 gap-[2px]">
        <PanelButton className="h-[35px] text-[19px]">現通貨決済</PanelButton>
        <PanelButton className="h-[35px] text-[20px]">自動決済</PanelButton>
      </div>
      <div className="grid grid-cols-2 gap-[2px]">
        <PanelButton className="h-[30px] text-[20px]">Pips消去</PanelButton>
        <PanelButton className="h-[30px] text-[20px]">画面保存</PanelButton>
      </div>
      <button className="flex h-[30px] items-center justify-center border-2 border-t-white border-l-white border-r-[#bcbcbc] border-b-[#bcbcbc] bg-[#dcdcdc] pb-[3px] text-[20px]">
        x 閉じる
      </button>
    </section>
  );
}

function ChartTabs() {
  const [active, setActive] = useState("GBPUSD,M5");

  return (
    <div className="flex h-[30px] shrink-0 items-start border-t border-black bg-[#f0f0f0] pl-[5px] font-['Noto_Sans',sans-serif] text-sm">
      {TABS.map(tab => (
        <button
          key={tab}
          onClick={() => setActive(tab)}
          className={
            tab === active
              ? "-mt-px h-6 border border-t-0 border-black bg-white px-[13px] pt-px text-black"
              : "mt-[2px] h-5 border-r border-[#808080] px-[13px] text-[#757575] nth-3:border-r-0"
          }
        >
          {tab}
        </button>
      ))}
      <div className="ml-auto flex gap-5 pt-[6px] pr-1">
        <button aria-label="前のタブ"><svg width="5" height="8" viewBox="0 0 5 8"><path d="M5 0v8L0 4z" fill="#a0a0a0" /></svg></button>
        <button aria-label="次のタブ"><svg width="5" height="8" viewBox="0 0 5 8"><path d="M0 0v8l5-4z" fill="#a0a0a0" /></svg></button>
      </div>
    </div>
  );
}

function OrdersTable() {
  return (
    <div className="flex h-[23px] shrink-0 overflow-hidden bg-[#f0f0f0]">
      <div className="flex w-[18px] shrink-0 flex-col items-center justify-between">
        <button aria-label="閉じる" className="pt-[2px]">
          <svg width="8" height="8" viewBox="0 0 8 8"><path d="M1 1l6 6M7 1L1 7" stroke="#000" strokeWidth="1.5" /></svg>
        </button>
        <div className="h-1 w-4 bg-[#d4e3f3]" />
      </div>
      <table className="w-full table-fixed border-t border-l border-[#a0a0a0] bg-white text-[15px] leading-[26px]">
        <thead>
          <tr>
            {COLUMNS.map((col, i) => (
              <th key={i} className={`${col.width} whitespace-nowrap border-r border-[#dcdcdc] px-[6px] font-[350] last:border-r-0 ${col.first ? "text-left" : "text-right"}`}>
                {col.label}
                {col.first && <span className="ml-3 text-[10px] text-[#777]">/</span>}
              </th>
            ))}
          </tr>
        </thead>
      </table>
    </div>
  );
}

export default function App() {
  return (
    <div className="flex h-screen flex-col overflow-hidden bg-white font-['Noto_Sans_CJK_JP',sans-serif]">
      <div className="h-[7px] shrink-0 bg-[#eef3fb]" />
      <MenuBar />
      <Toolbar />
      <main className="relative min-h-0 flex-1">
        <Chart />
        <ControllerPanel />
      </main>
      <ChartTabs />
      <OrdersTable />
    </div>
  );
}
